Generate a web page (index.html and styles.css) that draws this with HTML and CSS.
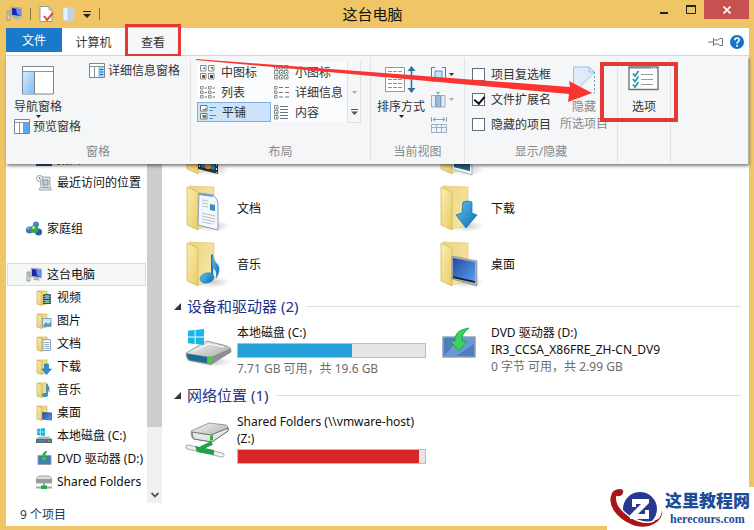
FILE: index.html
```html
<!DOCTYPE html>
<html lang="zh-CN">
<head>
  <meta charset="UTF-8">
  <meta name="viewport" content="width=device-width, initial-scale=1.0">
  <title>这台电脑</title>
  <link rel="stylesheet" href="styles.css">
</head>
<body>
  <!-- shared icons -->
  <svg class="defs" aria-hidden="true">
    <defs>
      <linearGradient id="gFlap" x1="0" y1="0" x2="1" y2="1">
        <stop offset="0" stop-color="#fbeeb0"/><stop offset="1" stop-color="#e9cb66"/>
      </linearGradient>
      <linearGradient id="gBack" x1="0" y1="0" x2="1" y2="1">
        <stop offset="0" stop-color="#ecd380"/><stop offset="1" stop-color="#f7e9a8"/>
      </linearGradient>
      <linearGradient id="gBlue" x1="0" y1="0" x2="1" y2="1">
        <stop offset="0" stop-color="#5ec1f0"/><stop offset="1" stop-color="#0b6fb5"/>
      </linearGradient>
      <linearGradient id="gScreen" x1="0" y1="0" x2="1" y2="1">
        <stop offset="0" stop-color="#244a9c"/><stop offset="1" stop-color="#5a9df5"/>
      </linearGradient>
      <linearGradient id="gMetal" x1="0" y1="0" x2="1" y2="1">
        <stop offset="0" stop-color="#f7f7f7"/><stop offset="1" stop-color="#9c9fa3"/>
      </linearGradient>
      <linearGradient id="gPane" x1="0" y1="0" x2="1" y2="1">
        <stop offset="0" stop-color="#d5ebff"/><stop offset="1" stop-color="#7fbcf4"/>
      </linearGradient>
      <radialGradient id="gShade"><stop offset="0" stop-color="#999" stop-opacity=".5"/><stop offset="1" stop-color="#999" stop-opacity="0"/></radialGradient>
    </defs>
    <symbol id="folder" viewBox="0 0 46 50">
      <ellipse cx="28" cy="42" rx="17" ry="6" fill="url(#gShade)"/>
      <path d="M4 2 L29 3 V41 L13 45 Z" fill="url(#gBack)" stroke="#dfc56f" stroke-width=".6"/>
      <path d="M2 3 L13 8 V46 L2 41 Z" fill="url(#gFlap)" stroke="#d1b352" stroke-width=".7"/>
    </symbol>
    <symbol id="s-folder" viewBox="0 0 16 16">
      <path d="M2 1 H11 V14 L6 15Z" fill="#efd98a" stroke="#d1b45a" stroke-width=".7"/>
      <path d="M1 1 L6 2.500 V15.500 L1 14Z" fill="url(#gFlap)" stroke="#c9aa4d" stroke-width=".7"/>
    </symbol>
    <symbol id="pc" viewBox="0 0 16 16">
      <path d="M1 5 H4 V14 H1Z" fill="#d7d9dc" stroke="#7a7d80" stroke-width=".7"/>
      <path d="M2 7 H3 M2 9 H3" stroke="#4a9" />
      <path d="M5 1 L15.500 2 V11 L5 10Z" fill="#c9ccd4" stroke="#8a8d95" stroke-width=".6"/>
      <path d="M6 2 L14.500 3 V10 L6 9Z" fill="#1926a8"/>
      <path d="M10 2.500 L14.500 3 V10 L11 8Z" fill="#6b8cf5"/>
      <path d="M9 10.500 L12 11 L14 13.500 L7 13Z" fill="#aeb1b8"/>
    </symbol>
    <symbol id="flag" viewBox="0 0 18 18">
      <path d="M0 2 L7.500 1 V8.500 H0Z M8.500 1 L18 0 V8.500 H8.500Z M0 9.500 H7.500 V17 L0 16Z M8.500 9.500 H18 V18 L8.500 17Z" fill="#18b7e8"/>
    </symbol>
    <symbol id="caret" viewBox="0 0 7 4"><path d="M0 0 H7 L3.500 4Z" fill="currentColor"/></symbol>
  </svg>

  <div class="window">
    <header class="titlebar">
      <div class="quick">
        <svg width="16" height="16"><use href="#pc"/></svg>
        <span class="sep"></span>
        <button aria-label="属性"><svg width="15" height="16" viewBox="0 0 15 16"><path d="M1 .5H10L13 4V15.500H1Z" fill="#fff" stroke="#9a9a9a"/><path d="M10 .5V4H13" fill="none" stroke="#9a9a9a"/><path d="M5 10L8 14L14 7" fill="none" stroke="#d9502f" stroke-width="2"/></svg></button>
        <button aria-label="新建文件夹"><svg width="13" height="16" viewBox="0 0 13 16"><path d="M3 1H12V14L5 15Z" fill="#bcd4ea"/><path d="M1 1L6 2V15.500L1 14Z" fill="#e3effa" stroke="#a9c4de" stroke-width=".6"/></svg></button>
        <button aria-label="自定义快速访问工具栏"><svg width="8" height="7" viewBox="0 0 8 7"><path d="M0 .5H8" stroke="#222"/><path d="M0 3H8L4 7Z" fill="#222"/></svg></button>
        <span class="sep"></span>
      </div>
      <h1>这台电脑</h1>
      <div class="controls">
        <button aria-label="最小化"><svg width="8" height="10" viewBox="0 0 8 10"><path d="M0 8H8" stroke="#222" stroke-width="2"/></svg></button>
        <button aria-label="最大化"><svg width="10" height="9" viewBox="0 0 10 9"><path d="M.5 1H9.500V8.500H.5Z" fill="none" stroke="#222"/><path d="M0 1H10" stroke="#222" stroke-width="2"/></svg></button>
        <button class="close" aria-label="关闭"><svg width="8" height="8" viewBox="0 0 8 8"><path d="M.5 .5L7.500 7.500M7.500 .5L.5 7.500" stroke="#fff" stroke-width="1.600"/></svg></button>
      </div>
    </header>

    <nav class="tabs">
      <button class="file">文件</button>
      <button class="tab">计算机</button>
      <button class="tab marked">查看</button>
      <div class="help">
        <button aria-label="固定功能区"><svg width="15" height="10" viewBox="0 0 15 10"><path d="M0 5H5M5.500 1V9M5.500 3H10L12 1.500H14.500V8.500H12L10 7H5.500" fill="none" stroke="#777"/></svg></button>
        <button aria-label="帮助"><svg width="14" height="14" viewBox="0 0 14 14"><circle cx="7" cy="7" r="7" fill="#1673c5"/><path d="M4.800 5.300Q4.800 3 7 3T9.200 5Q9.200 6 8 6.800Q7 7.500 7 8.800" fill="none" stroke="#fff" stroke-width="1.600"/><circle cx="7" cy="10.800" r="1" fill="#fff"/></svg></button>
      </div>
    </nav>

    <div class="workspace">
      <section class="ribbon">
        <div class="group panes">
          <div class="group-body">
            <div class="stack">
              <button class="big">
                <svg width="32" height="29" viewBox="0 0 32 29"><path d="M.5 .5H31.500V28H.5Z" fill="#fff" stroke="#7a8792"/><path d="M1 5.500H31" stroke="#8a97a2"/><path d="M1 6H12V27.500H1Z" fill="url(#gPane)"/><path d="M12.500 6V28" stroke="#7a8792"/></svg>
                <span>导航窗格</span>
                <svg class="caret" width="5" height="3"><use href="#caret"/></svg>
              </button>
              <button class="small"><svg width="16" height="15" viewBox="0 0 16 15"><path d="M.5 .5H15.500V14.500H.5Z" fill="#fff" stroke="#7a8792"/><path d="M1 3.500H15M5.500 4V14" stroke="#8a97a2"/><path d="M9 4H15V14H9Z" fill="#5aa9ec"/></svg>预览窗格</button>
            </div>
            <button class="small"><svg width="16" height="15" viewBox="0 0 16 15"><path d="M.5 .5H15.500V14.500H.5Z" fill="#fff" stroke="#7a8792"/><path d="M1 3.500H15M5.500 4V14" stroke="#8a97a2"/><path d="M9 4H15V14H9Z" fill="#a9d3f8"/><path d="M10.500 6.500H14M10.500 9H14M10.500 11.500H14" stroke="#1d67ab"/></svg>详细信息窗格</button>
          </div>
          <div class="group-name">窗格</div>
        </div>

        <div class="group layout">
          <div class="group-body">
            <div class="gallery">
              <button><svg width="15" height="15" viewBox="0 0 15 15"><path d="M.5 .5H6V6H.5ZM8.500 .5H14V6H8.500ZM.5 8.500H6V14H.5ZM8.500 8.500H14V14H8.500Z" fill="#fff" stroke="#8a8a8a"/><path d="M2 4H5V2Z" fill="#289"/><path d="M10 2H13V5Z" fill="#683"/><path d="M2 10H5V13H2Z" fill="#a42"/><path d="M10 10H13V13H10Z" fill="#247"/></svg>中图标</button>
              <button><svg width="15" height="15" viewBox="0 0 15 15"><path d="M.5 .5H4V4H.5ZM5.500 .5H9V4H5.500ZM10.500 .5H14V4H10.500ZM.5 5.500H4V9H.5ZM5.500 5.500H9V9H5.500ZM10.500 5.500H14V9H10.500ZM.5 10.500H4V14H.5ZM5.500 10.500H9V14H5.500ZM10.500 10.500H14V14H10.500Z" fill="#fff" stroke="#8a8a8a"/><path d="M2 2.500H3M7 7.500H8M12 7.500H13M2 12.500H3" stroke="#27a"/><path d="M7 12.500H8M12 12.500H13M7 2.500H8" stroke="#b33"/></svg>小图标</button>
              <button><svg width="15" height="13" viewBox="0 0 15 13"><path d="M.5 .5H3V3H.5ZM.5 5H3V7.500H.5ZM.5 9.500H3V12H.5ZM8.500 .5H11V3H8.500ZM8.500 5H11V7.500H8.500ZM8.500 9.500H11V12H8.500Z" fill="#fff" stroke="#8a8a8a"/><path d="M4.500 2H7M4.500 6.500H7M4.500 11H7M12.500 2H15M12.500 6.500H15M12.500 11H15" stroke="#777"/></svg>列表</button>
              <button><svg width="15" height="13" viewBox="0 0 15 13"><path d="M.5 .5H3V3H.5ZM.5 5H3V7.500H.5ZM.5 9.500H3V12H.5Z" fill="#fff" stroke="#8a8a8a"/><path d="M5 1.500H9M11 1.500H15M5 6.500H9M11 6.500H15M5 11H9M11 11H15" stroke="#777"/></svg>详细信息</button>
              <button class="selected"><svg width="16" height="15" viewBox="0 0 16 15"><path d="M.5 .5H7V6H.5ZM.5 8.500H7V14H.5Z" fill="#fff" stroke="#777"/><path d="M2 5H6V3Z" fill="#289"/><path d="M2 10H6V13H3Z" fill="#683"/><path d="M9.500 2.500H16M9.500 5.500H13M9.500 10.500H16M9.500 13.500H13" stroke="#39b"/></svg>平铺</button>
              <button><svg width="15" height="15" viewBox="0 0 15 15"><path d="M.5 .5H4V4H.5ZM.5 5.500H4V9H.5ZM.5 10.500H4V14H.5Z" fill="#fff" stroke="#8a8a8a"/><path d="M2 2.500H3M2 7.500H3M2 12.500H3" stroke="#284"/><path d="M6 1.500H14M6 4.500H14M6 7.500H14M6 10.500H14M6 13.500H14" stroke="#678"/></svg>内容</button>
            </div>
            <div class="gallery-scroll">
              <button class="dim" aria-label="上一行"><svg width="5" height="3"><use href="#caret"/></svg></button>
              <button class="dim" aria-label="下一行"><svg width="5" height="3"><use href="#caret"/></svg></button>
              <button aria-label="更多"><svg width="7" height="6" viewBox="0 0 7 6"><path d="M0 .5H7" stroke="#555"/><path d="M0 2.500H7L3.500 6Z" fill="#555"/></svg></button>
            </div>
          </div>
          <div class="group-name">布局</div>
        </div>

        <div class="group current">
          <div class="group-body">
            <button class="big">
              <svg width="32" height="27" viewBox="0 0 32 27"><path d="M.5 1.500H19.500V25.500H.5Z" fill="#fff" stroke="#8d99a3"/><path d="M3 5.500H18M3 9.500H18M3 13.500H18M3 17.500H18M3 21.500H18" stroke="#7c98ac" stroke-dasharray="4 1"/><path d="M26.500 3V24" stroke="#2f6fa3" stroke-width="1.500"/><path d="M22.500 5L26.500 0L30.500 5ZM22.500 22L26.500 27L30.500 22Z" fill="#2f6fa3"/></svg>
              <span>排序方式</span>
              <svg class="caret" width="5" height="3"><use href="#caret"/></svg>
            </button>
            <div class="tools">
              <button aria-label="分组依据"><svg width="15" height="15" viewBox="0 0 15 15"><path d="M4 .5H.5V14H4M11 .5H14.500V14H11" fill="none" stroke="#4d7da3"/><path d="M4 4H11V12H4Z" fill="#c5e3fa" stroke="#4b9ad6"/></svg><svg width="5" height="3"><use href="#caret"/></svg></button>
              <button class="dim" aria-label="添加列"><svg width="15" height="16" viewBox="0 0 15 16"><path d="M.5 3.500H4.500V15H.5ZM10 3.500H14V15H10Z" fill="#e4edf5" stroke="#9aafc2"/><path d="M5 3.500H9.500V15H5Z" fill="#9bbcdc" stroke="#7c9bb8"/><path d="M5 0H9L7 2.500Z" fill="#7c9bb8"/></svg><svg width="5" height="3"><use href="#caret"/></svg></button>
              <button class="dim" aria-label="将所有列调整为合适的大小"><svg width="16" height="16" viewBox="0 0 16 16"><path d="M.5 0V5M15.500 0V5M2 2.500H14M4.500 .5L2 2.500L4.500 4.500M11.500 .5L14 2.500L11.500 4.500" fill="none" stroke="#8ba3b8"/><path d="M.5 7.500H15.500V15.500H.5ZM5.500 7V15M10.500 7V15M0 10.500H15" fill="#eef3f8" stroke="#9aafc2"/></svg></button>
            </div>
          </div>
          <div class="group-name">当前视图</div>
        </div>

        <div class="group show">
          <div class="group-body">
            <div class="checks">
              <label><input type="checkbox">项目复选框</label>
              <label><input type="checkbox" checked>文件扩展名</label>
              <label><input type="checkbox">隐藏的项目</label>
            </div>
            <button class="big disabled" disabled>
              <svg width="24" height="28" viewBox="0 0 24 28"><path d="M1.500 1H17L22.500 6V9L6 25L1.500 26Z" fill="#dfebf8"/><path d="M1.500 26V1H17L22.500 6H17V1" fill="none" stroke="#9dbfdd"/><path d="M22.500 6V27H1" fill="none" stroke="#7f9db8" stroke-dasharray="2 2"/><path d="M22 6L2 26" stroke="#b8cde2"/></svg>
              <span>隐藏<br>所选项目</span>
            </button>
          </div>
          <div class="group-name">显示/隐藏</div>
        </div>

        <div class="group options">
          <div class="group-body">
            <button class="big">
              <svg width="32" height="25" viewBox="0 0 32 25"><path d="M1 1H30V23.500H1Z" fill="#fff" stroke="#70767c" stroke-width="1.400"/><path d="M1 2H30" stroke="#70767c"/><path d="M23 2H29" stroke="#fff" stroke-dasharray="1 1"/><path d="M13 8.500H25M13 13.500H25M13 18.500H25" stroke="#999"/><path d="M5 7.500L7 10L10.500 5M5 13L7 15.500L10.500 10.500M5 18.500L7 21L10.500 16" fill="none" stroke="#2c9aa8" stroke-width="1.800"/></svg>
              <span>选项</span>
            </button>
          </div>
        </div>
      </section>

      <nav class="sidebar">
        <a href="#"><svg width="16" height="16" viewBox="0 0 16 16"><path d="M0 2H16V14H0Z" fill="#2c4a80"/></svg>桌面</a>
        <a href="#"><svg width="16" height="16" viewBox="0 0 16 16"><path d="M4 2H14V11L15.500 15H3L5 11Z" fill="#dde5ea" stroke="#8b979f" stroke-width=".8"/><path d="M7 5H12V10H7ZM6 12.500H13" fill="#b9d1df" stroke="#7d95a4"/><circle cx="3.500" cy="3.500" r="3" fill="#fff" stroke="#8b979f"/><path d="M3.500 2V4H5" fill="none" stroke="#678"/></svg>最近访问的位置</a>
        <a class="root" href="#"><svg width="16" height="16" viewBox="0 0 16 16"><circle cx="10" cy="3.500" r="3" fill="#4b82c9"/><circle cx="3.500" cy="9" r="3.500" fill="#3d72bd"/><circle cx="12.500" cy="11" r="3.500" fill="#2c5ca8"/><circle cx="8.500" cy="8" r="4" fill="#35a84a"/><circle cx="7.500" cy="6.500" r="1.600" fill="#a7e4a6"/><circle cx="2.500" cy="7.500" r="1" fill="#b9d4f5"/></svg>家庭组</a>
        <a class="root current-place" href="#"><svg width="16" height="16"><use href="#pc"/></svg>这台电脑</a>
        <a href="#"><svg width="16" height="16" viewBox="0 0 16 16"><use href="#s-folder"/><path d="M7 4H15V14H7Z" fill="#39474f"/><path d="M9 5H13V9H9Z" fill="#5fb3d9"/><path d="M9 10H13V13H9Z" fill="#7dbb86"/><path d="M8 4V14M14 4V14" stroke="#ddd" stroke-dasharray="1 1"/></svg>视频</a>
        <a href="#"><svg width="16" height="16" viewBox="0 0 16 16"><use href="#s-folder"/><path d="M6.500 5.500H15V13.500H6.500Z" fill="#cfeaf8" stroke="#7fa3b5"/><path d="M7 13L10 9L12 11L15 9V13Z" fill="#5a9aa0"/></svg>图片</a>
        <a href="#"><svg width="16" height="16" viewBox="0 0 16 16"><use href="#s-folder"/><path d="M7 3.500H14.500V14.500H7Z" fill="#f7fafd" stroke="#8fa3b5"/><path d="M8.500 6.500H13M8.500 8.500H13M8.500 10.500H13M8.500 12.500H13" stroke="#8cadd0"/></svg>文档</a>
        <a href="#"><svg width="16" height="16" viewBox="0 0 16 16"><use href="#s-folder"/><path d="M8.500 5H12.500V10H15.500L10.500 15.500L6 10H8.500Z" fill="#2791d8" stroke="#126aa8" stroke-width=".6"/></svg>下载</a>
        <a href="#"><svg width="16" height="16" viewBox="0 0 16 16"><use href="#s-folder"/><path d="M11 2V13" stroke="#2380bd" stroke-width="1.500"/><path d="M11 2Q15 6 13 11Q13 8 11 6Z" fill="#2f92cf"/><ellipse cx="9" cy="13" rx="3" ry="2" fill="#2f92cf"/></svg>音乐</a>
        <a href="#"><svg width="16" height="16" viewBox="0 0 16 16"><use href="#s-folder"/><path d="M6.500 7.500L15.500 8V15L6.500 14Z" fill="url(#gScreen)" stroke="#44597f" stroke-width=".8"/></svg>桌面</a>
        <a href="#"><svg width="16" height="16" viewBox="0 0 16 16"><use href="#flag" x="1" y="0" width="8" height="8"/><path d="M3 8.500H13L16 11V15H0V11Z" fill="#aeb6bd"/><path d="M0 11H16V15H0Z" fill="#5b6871"/><path d="M2 13H9" stroke="#3aa0c9"/><path d="M12 13H14" stroke="#5e5"/></svg>本地磁盘 (C:)</a>
        <a href="#"><svg width="16" height="16" viewBox="0 0 16 16"><path d="M2 4.500H15V13.500H2Z" fill="#4779bd" stroke="#8ea1b8"/><path d="M11 0Q6 1 6.500 6H4L8 11L12 6H9Q9 3 11 0Z" fill="#33c258" stroke="#15903a" stroke-width=".5"/></svg>DVD 驱动器 (D:)</a>
        <a href="#"><svg width="16" height="16" viewBox="0 0 16 16"><path d="M3 2H13L16 4.500V9H0V4.500Z" fill="#dadcde" stroke="#888" stroke-width=".7"/><path d="M0 5H16V9H0Z" fill="#9a9da0"/><path d="M8 9V13M0 13.500H16" stroke="#8fb59c" stroke-width="2"/><path d="M5 11.500H11V15H5Z" fill="#23a653"/></svg>Shared Folders</a>
      </nav>

      <div class="scrollbar">
        <div class="thumb"></div>
        <button aria-label="向下滚动"><svg width="8" height="6" viewBox="0 0 8 6"><path d="M.5 1L4 4.500L7.500 1" fill="none" stroke="#555" stroke-width="1.800"/></svg></button>
      </div>

      <main class="content">
        <div class="tiles folders">
          <a href="#" class="tile"><svg width="46" height="50" viewBox="0 0 46 50"><use href="#folder"/><path d="M13 16L33 20V46L13 41Z" fill="#26323a"/><path d="M16 20L30 23V31L16 28Z" fill="#4ba5d5"/><path d="M16 30L30 33V42L16 39Z" fill="#38779a"/><circle cx="23" cy="38" r="3" fill="#e08a35"/><path d="M14.500 17V41M31.500 20V45" stroke="#ddd" stroke-dasharray="2 2"/></svg><span>视频</span></a>
          <a href="#" class="tile"><svg width="46" height="50" viewBox="0 0 46 50"><use href="#folder"/><path d="M13 16L33 20V47L13 41Z" fill="#e9f3f8" stroke="#a5b5be"/><path d="M15 19L31 22V43L15 39Z" fill="#3f8eb5"/><path d="M15 34L24 30L31 36V43L15 39Z" fill="#2b5e7a"/></svg><span>图片</span></a>
          <a href="#" class="tile"><svg width="46" height="50" viewBox="0 0 46 50"><use href="#folder"/><path d="M14 9L28 11Q33 15 33 19V46L13 41Z" fill="#f3f6fb" stroke="#8b9db3"/><path d="M14 10L28 12" stroke="#5ea6dc" stroke-width="2"/><path d="M17 16L23 17M17 19L23 20M17 22L23 23M17 29L30 32M17 32L30 35M17 35L30 38M17 38L27 40" stroke="#b7bfcc"/><path d="M25 20L30 21V27L25 26Z" fill="#3c8cc4"/></svg><span>文档</span></a>
          <a href="#" class="tile"><svg width="46" height="50" viewBox="0 0 46 50"><use href="#folder"/><path d="M24 18Q28 16 33 18V29L38 31L27 44L17 31L23 29Z" fill="url(#gBlue)" stroke="#126ba8" stroke-width=".7"/></svg><span>下载</span></a>
          <a href="#" class="tile"><svg width="46" height="50" viewBox="0 0 46 50"><use href="#folder"/><path d="M27 15V39" stroke="#1d77b8" stroke-width="2"/><path d="M27 14Q29 22 33 25Q36 31 31 38Q33 30 27 27Z" fill="url(#gBlue)" stroke="#1d77b8" stroke-width=".6"/><ellipse cx="22" cy="38" rx="7" ry="5" fill="url(#gBlue)" stroke="#1d77b8" stroke-width=".6" transform="rotate(-15 22 38)"/></svg><span>音乐</span></a>
          <a href="#" class="tile"><svg width="46" height="50" viewBox="0 0 46 50"><use href="#folder"/><path d="M13 16L38 21V46L13 39Z" fill="#aab3bd" stroke="#77808a" stroke-width=".6"/><path d="M14 18L36 22V41L14 36Z" fill="url(#gScreen)"/><path d="M14 36L36 41V43L14 38Z" fill="#17213a"/></svg><span>桌面</span></a>
        </div>

        <h2><svg width="7" height="7" viewBox="0 0 7 7"><path d="M7 0V7H0Z" fill="#333"/></svg>设备和驱动器 (2)</h2>
        <div class="tiles">
          <a href="#" class="tile">
            <svg width="48" height="48" viewBox="0 0 48 48"><ellipse cx="28" cy="42" rx="20" ry="5" fill="url(#gShade)"/><path d="M1 33L22 21L42 26Q47 28 46 32L26 44L4 40Q1 38 1 33Z" fill="url(#gMetal)" stroke="#777" stroke-width=".7"/><path d="M1 33L26 37L46 28V32L26 45L4 41Q1 39 1 33Z" fill="#8b9095"/><path d="M2 34L22 37V43L5 40Q2 38 2 34Z" fill="#176a91"/><path d="M23 37L27 36V42L23 43Z" fill="#43d337"/><path d="M8 31L24 24L39 27" fill="none" stroke="#fff"/><use href="#flag" x="2" y="9" width="18" height="16"/></svg>
            <div class="info">
              <span>本地磁盘 (C:)</span>
              <div class="bar"><div class="used" style="width: 61%"></div></div>
              <span class="free">7.71 GB 可用，共 19.6 GB</span>
            </div>
          </a>
          <a href="#" class="tile">
            <svg width="48" height="48" viewBox="0 0 48 48"><path d="M4 17H36V37H4Z" fill="#4d7fc0" stroke="#93a2b3" stroke-width="1.500"/><path d="M5 36L21 18H35V24L17 36Z" fill="#80aade" opacity=".6"/><path d="M30 8Q15 10 16 21H11L20 31L28 21H23Q22 14 30 8Z" fill="#3bd35e" stroke="#169b3c" stroke-width=".8"/></svg>
            <div class="info">
              <span>DVD 驱动器 (D:)</span>
              <span>IR3_CCSA_X86FRE_ZH-CN_DV9</span>
              <span class="free">0 字节 可用，共 2.99 GB</span>
            </div>
          </a>
        </div>

        <h2><svg width="7" height="7" viewBox="0 0 7 7"><path d="M7 0V7H0Z" fill="#333"/></svg>网络位置 (1)</h2>
        <div class="tiles">
          <a href="#" class="tile">
            <svg width="48" height="50" viewBox="0 0 48 50"><path d="M6 22L24 14L41 16Q44 17 43 22L27 33L9 30Q6 29 6 22Z" fill="url(#gMetal)" stroke="#777" stroke-width=".7"/><path d="M7 23L26 26L43 19V22L27 33L9 30Q7 28 7 23Z" fill="#e3e5e7" stroke="#555" stroke-width=".8"/><path d="M25 27L28 26V31L25 32Z" fill="#2b3"/><path d="M3 38L37 46" stroke="#a9b1af" stroke-width="5" stroke-linecap="round"/><path d="M3 38L37 46" stroke="#eef1f0" stroke-width="3" stroke-linecap="round"/><path d="M10 37L29 41V46L12 43Z" fill="#1fa344"/><path d="M16 39L27 34" stroke="#1fa344" stroke-width="4"/></svg>
            <div class="info">
              <span>Shared Folders (\\vmware-host) (Z:)</span>
              <div class="bar full"><div class="used" style="width: 97%"></div></div>
            </div>
          </a>
        </div>
      </main>

      <svg class="arrow" width="400" height="48" viewBox="0 0 400 48" aria-hidden="true"><path d="M6 3L380 31L379 25L402 37L378 46L379 38L6 4Z" fill="#fb3432"/></svg>
    </div>

    <footer class="status">9 个项目</footer>
  </div>

  <div class="brand">
    <svg width="58" height="42" viewBox="0 0 58 42"><circle cx="33" cy="21" r="17" fill="#2a3890"/><path d="M14 1Q7 1 5 5Q-1 18 15 31Q34 45 50 34Q57 28 54 22Q56 30 47 33Q36 37 22 28Q8 18 10 8Q14 9 16 5Q17 2 14 1Z" fill="#a91419"/><path d="M10 8Q8 18 22 28Q36 37 47 33" fill="none" stroke="#fff" stroke-width="1.500"/><path d="M25 11H42V15L31 26H38V22H42V31H23V27L34 16H29V19H25Z" fill="#fff"/></svg>
    <div class="brand-text">
      <strong>这里教程网</strong>
      <span>herecours.com</span>
    </div>
  </div>
</body>
</html>
```

FILE: styles.css
```css
* {
  box-sizing: border-box;
}

body {
  margin: 0;
  height: 100vh;
  overflow: hidden;
  background-color: #efc565;
  font-family: "Noto Sans", "Noto Sans CJK SC", sans-serif;
  font-size: 12px;
  line-height: 17px;
  color: #111;
}

button {
  margin: 0;
  padding: 0;
  border: none;
  background: none;
  font: inherit;
  color: inherit;
  white-space: nowrap;
}

a {
  color: inherit;
  text-decoration: none;
}

svg {
  display: block;
  flex: none;
}

.defs {
  position: absolute;
  width: 0;
  height: 0;
}

.window {
  height: 100%;
  padding: 0 5px 4px 6px;
  display: flex;
  flex-direction: column;
}

/* title bar */
.titlebar {
  height: 28px;
  flex: none;
  display: grid;
  grid-template-columns: 1fr auto 1fr;
}

.quick {
  display: flex;
  align-items: center;
  gap: 8px;
}

.sep {
  width: 1px;
  height: 12px;
  background-color: #8a7440;
}

h1 {
  margin: 0;
  padding-right: 10px;
  font-size: 15px;
  font-weight: normal;
  line-height: 28px;
}

.controls {
  display: flex;
  justify-content: flex-end;
  height: 19px;
}

.controls button {
  width: 27px;
  display: flex;
  align-items: center;
  justify-content: center;
}

.controls .close {
  width: 45px;
  background-color: #c75050;
}

/* tabs */
.tabs {
  height: 28px;
  flex: none;
  display: flex;
  background-color: #fff;
  border-bottom: 1px solid #dadbdc;
}

.file {
  width: 56px;
  height: 24px;
  background-color: #1979ca;
  color: #fff;
}

.tab {
  width: 63px;
  height: 28px;
  color: #333;
}

.marked {
  width: 56px;
  position: relative;
  background-color: #f5f6f7;
}

.marked::after {
  content: "";
  position: absolute;
  inset: -4px 0 -1px;
  border: 3px solid #e53935;
}

.help {
  margin-left: auto;
  padding-right: 5px;
  display: flex;
  align-items: center;
  gap: 7px;
}

/* ribbon drops down over the folder view */
.workspace {
  position: relative;
  flex: 1;
  min-height: 0;
  display: grid;
  grid-template-columns: 141px 15px 1fr;
  background-color: #fff;
}

.ribbon {
  position: absolute;
  inset: 0 1px auto 0;
  z-index: 1;
  height: 108px;
  display: flex;
  background-color: #f5f6f7;
  box-shadow: 1px 2px 3px rgba(0, 0, 0, 0.5);
  color: #333;
}

.group {
  display: flex;
  flex-direction: column;
  margin: 2px 0;
  border-right: 1px solid #e0e2e4;
}

.group-body {
  flex: 1;
  display: flex;
  align-items: flex-start;
  padding-top: 4px;
}

.group-name {
  height: 19px;
  text-align: center;
  color: #8a8a8a;
}

.panes {
  width: 185px;
}

.panes .group-body {
  padding-left: 8px;
  gap: 8px;
}

.stack {
  display: flex;
  flex-direction: column;
}

.layout {
  width: 180px;
}

.layout .group-body {
  padding-left: 6px;
}

.current {
  width: 94px;
}

.current .group-body {
  padding-left: 6px;
  gap: 6px;
}

.show {
  width: 153px;
}

.show .group-body {
  padding-left: 7px;
  gap: 9px;
}

.options {
  width: 53px;
}

.options .group-body {
  justify-content: center;
  position: relative;
}

.options .group-body::after {
  content: "";
  position: absolute;
  inset: 4px -8px 40px -18px;
  border: 4px solid #e53935;
}

.big {
  display: flex;
  flex-direction: column;
  align-items: center;
  height: 56px;
}

.big svg:first-child {
  margin: 4px 0 0;
}

.big span {
  margin-top: auto;
}

.stack .big {
  width: 48px;
}

.options .big {
  height: 53px;
}

.disabled {
  height: 70px;
  color: #8a8a8a;
}

.big .caret {
  color: #222;
}

.small {
  display: flex;
  align-items: center;
  gap: 3px;
}

.gallery {
  display: grid;
  grid-template-columns: 74px 76px;
  grid-auto-rows: 20px;
  background-color: #fbfcfd;
}

.gallery button {
  display: flex;
  align-items: center;
  gap: 6px;
  padding: 0 2px;
  border: 1px solid transparent;
}

.gallery .selected {
  background-color: #cce4fb;
  border-color: #7fb0de;
}

.gallery-scroll {
  display: grid;
  grid-template-rows: repeat(3, 20px);
  width: 14px;
  border: 1px solid #dfe1e3;
  border-top: none;
}

.gallery-scroll button {
  display: grid;
  place-items: center;
}

.dim {
  color: #aaa;
}

.tools {
  display: grid;
  grid-template-rows: repeat(3, 25px);
}

.tools button {
  display: flex;
  align-items: center;
  gap: 3px;
}

.checks {
  display: grid;
  grid-template-rows: repeat(3, 25px);
}

.checks label {
  display: flex;
  align-items: center;
  gap: 6px;
  white-space: nowrap;
}

.checks input {
  appearance: none;
  width: 13px;
  height: 13px;
  margin: 0;
  border: 1px solid #5c6f80;
  background-color: #fff;
}

.checks input:checked::after {
  content: "";
  display: block;
  width: 5px;
  height: 8px;
  margin: 0 3px;
  border: solid #111;
  border-width: 0 2px 2px 0;
  transform: rotate(40deg);
}

/* navigation pane */
.sidebar {
  display: flex;
  flex-direction: column;
  justify-content: flex-end;
  overflow: hidden;
  padding: 0 1px 10px;
}

.sidebar a {
  height: 23px;
  flex: none;
  display: flex;
  align-items: center;
  gap: 5px;
  padding-left: 29px;
  white-space: nowrap;
}

.sidebar .root {
  margin-top: 23px;
  padding-left: 19px;
}

.sidebar .current-place {
  padding-left: 18px;
  background-color: #f5f6f7;
  border: 1px solid #dcdcdc;
}

.scrollbar {
  display: flex;
  flex-direction: column;
  background-color: #f0f0f0;
}

.thumb {
  height: 83%;
  background-color: #cdcdcd;
}

.scrollbar button {
  height: 17px;
  margin-top: auto;
  display: grid;
  place-items: center;
}

/* folder view */
.content {
  overflow: hidden;
  padding: 68px 8px 0 12px;
}

.tiles {
  display: grid;
  grid-template-columns: 254px 254px;
}

.tile {
  display: flex;
  align-items: flex-start;
  gap: 4px;
  padding: 4px 0 4px 11px;
}

.tile > svg {
  margin-top: -4px;
}

.folders .tile {
  height: 56px;
  align-items: center;
  gap: 6px;
}

.folders .tile > svg {
  margin-top: 2px;
}

.info {
  width: 190px;
  display: flex;
  flex-direction: column;
}

.free {
  color: #6d6d6d;
}

.bar {
  width: 189px;
  height: 15px;
  margin: 2px 0;
  border: 1px solid #bcbcbc;
  background-color: #e6e6e6;
}

.used {
  height: 100%;
  background-color: #26a0da;
}

.full .used {
  background-color: #da2626;
}

h2 {
  display: flex;
  align-items: center;
  gap: 6px;
  height: 28px;
  margin: 0;
  font-size: 15px;
  font-weight: normal;
  color: #1e3287;
}

h2::after {
  content: "";
  flex: 1;
  height: 1px;
  margin-left: 2px;
  background-color: #dedfe3;
}

.arrow {
  position: absolute;
  left: 184px;
  top: 0;
  z-index: 2;
  overflow: visible;
}

.status {
  height: 23px;
  flex: none;
  padding-left: 14px;
  line-height: 23px;
  background-color: #fff;
  color: #1e395b;
}

/* site badge in the corner */
.brand {
  position: absolute;
  right: 0;
  bottom: 0;
  z-index: 3;
  width: 147px;
  height: 43px;
  display: flex;
  align-items: center;
  background-color: #fff;
}

.brand-text {
  display: flex;
  flex-direction: column;
  align-items: center;
  color: #1b4d9b;
  font-family: "Liberation Serif", "Noto Sans CJK SC", serif;
  font-weight: bold;
  white-space: nowrap;
}

.brand-text strong {
  font-size: 17px;
  line-height: 20px;
}

.brand-text span {
  font-size: 12px;
  line-height: 14px;
}
```
